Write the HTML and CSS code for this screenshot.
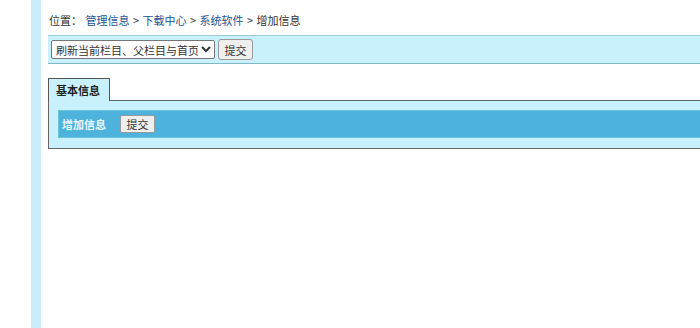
FILE: index.html
```html
<!DOCTYPE html>
<html lang="zh-CN">

<head>
    <meta charset="UTF-8">
    <title>增加信息</title>
    <link rel="stylesheet" href="styles.css">
</head>

<body>
    <div class="page">
        <div class="side"></div>

        <div class="main">
            <div class="crumb">
                位置： <a href="#">管理信息</a> &gt; <a href="#">下载中心</a> &gt; <a href="#">系统软件</a> &gt; 增加信息
            </div>

            <form class="toolbar">
                <select class="refresh">
                    <option>刷新当前栏目、父栏目与首页</option>
                    <option>刷新当前栏目</option>
                    <option>不刷新</option>
                </select>
                <button type="button" class="btn">提交</button>
            </form>

            <div class="tabs">
                <span class="tab">基本信息</span>
            </div>
            <div class="panel">
                <div class="bar">
                    <span class="bar-title">增加信息</span>
                    <button type="button" class="btn btn-small">提交</button>
                </div>
            </div>
        </div>
    </div>
</body>

</html>
```

FILE: styles.css
```css
body {
    margin: 0;
    font-family: "Noto Sans CJK SC", "Microsoft YaHei", sans-serif;
    font-size: 11px;
    color: #333;
    background: #fff;
}

.page {
    display: flex;
    height: 328px;
    overflow: hidden;
}

.side {
    width: 41px;
    flex: none;
    background: linear-gradient(to right, #fff 31px, #c9eefc 31px);
}

.main {
    flex: 1;
    margin-left: 7px;
    margin-right: -6px;
}

.crumb {
    padding-top: 12px;
    padding-left: 1px;
    height: 16px;
    line-height: 16px;
    margin-bottom: 7px;
    word-spacing: 1px;
    color: #333;
}

.crumb a {
    color: #1d5490;
    text-decoration: none;
}

.toolbar {
    margin: 0;
    height: 27px;
    display: flex;
    align-items: center;
    gap: 3px;
    padding-left: 3px;
    background: #c8f0fd;
    border-top: 1px solid #9ccad7;
    border-bottom: 1px solid #80b8c8;
}

.refresh {
    width: 164px;
    height: 19px;
    font-family: inherit;
    font-size: 11px;
    color: #333;
    border: 1px solid #767676;
    border-radius: 2px;
    background: #fff;
    padding: 0;
}

.btn {
    width: 35px;
    height: 21px;
    padding: 0;
    font-family: inherit;
    font-size: 11px;
    color: #333;
    background: #efefef;
    border: 1px solid #9a9a9a;
    border-radius: 3px;
}

.btn-small {
    height: 18px;
    border-radius: 2px;
}

.tabs {
    margin-top: 13px;
    display: flex;
}

.tab {
    position: relative;
    top: 1px;
    width: 62px;
    height: 23px;
    line-height: 22px;
    padding-left: 7px;
    box-sizing: border-box;
    font-weight: bold;
    color: #222;
    background: #c8f0fd;
    border: 1px solid #555;
    border-bottom: none;
}

.panel {
    background: #c8f0fd;
    border: 1px solid #666;
    border-right: none;
    padding: 9px 0 10px 9px;
}

.bar {
    height: 26px;
    display: flex;
    align-items: center;
    gap: 14px;
    padding-left: 3px;
    background: #4db3dd;
    border: 1px solid #68c6d4;
    border-right: none;
}

.bar-title {
    color: #e8f8ff;
    font-weight: bold;
}
```
